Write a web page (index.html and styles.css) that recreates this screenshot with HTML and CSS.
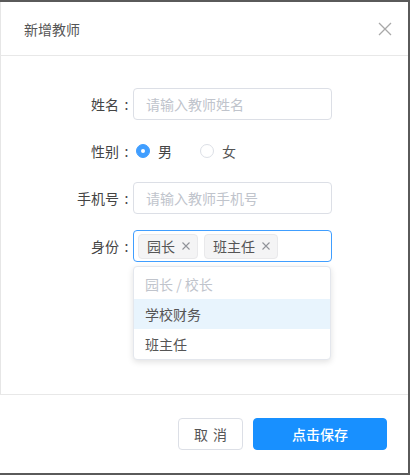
FILE: index.html
```html
<!DOCTYPE html>
<html lang="zh">
<head>
<meta charset="utf-8">
<link rel="stylesheet" href="styles.css">
</head>
<body>
<div class="dialog">
  <div class="dialog-header">
    <span class="dialog-title">新增教师</span>
    <span class="close">
      <svg width="14" height="14" viewBox="0 0 14 14"><path d="M1 1 L13 13 M13 1 L1 13" stroke="#a8a8a8" stroke-width="1.3" fill="none"/></svg>
    </span>
  </div>
  <div class="dialog-body">
    <div class="form-row">
      <label class="form-label">姓名<span class="colon">:</span></label>
      <div class="input"><span class="placeholder">请输入教师姓名</span></div>
    </div>
    <div class="form-row radio-row">
      <label class="form-label">性别<span class="colon">:</span></label>
      <div class="radios">
        <span class="radio checked"><span class="radio-dot"></span><span class="radio-text">男</span></span>
        <span class="radio"><span class="radio-dot"></span><span class="radio-text">女</span></span>
      </div>
    </div>
    <div class="form-row">
      <label class="form-label">手机号<span class="colon">:</span></label>
      <div class="input"><span class="placeholder">请输入教师手机号</span></div>
    </div>
    <div class="form-row select-row">
      <label class="form-label">身份<span class="colon">:</span></label>
      <div class="select-wrap">
        <div class="input select">
          <span class="tag">园长<svg class="tag-close" width="8" height="8" viewBox="0 0 8 8"><path d="M0.5 0.5 L7.5 7.5 M7.5 0.5 L0.5 7.5" stroke="#909399" stroke-width="1.1" fill="none"/></svg></span>
          <span class="tag">班主任<svg class="tag-close" width="8" height="8" viewBox="0 0 8 8"><path d="M0.5 0.5 L7.5 7.5 M7.5 0.5 L0.5 7.5" stroke="#909399" stroke-width="1.1" fill="none"/></svg></span>
        </div>
        <ul class="dropdown">
          <li class="option disabled">园长 / 校长</li>
          <li class="option hover">学校财务</li>
          <li class="option">班主任</li>
        </ul>
      </div>
    </div>
  </div>
  <div class="dialog-footer">
    <button class="btn btn-default">取 消</button>
    <button class="btn btn-primary">点击保存</button>
  </div>
</div>
</body>
</html>
```

FILE: styles.css
```css
* { box-sizing: border-box; }
html, body { height: 100%; }
body {
  margin: 0;
  padding: 2px 2px 2px 0;
  background: #5a5a5a;
  font-family: "Noto Sans CJK SC", "Noto Sans", sans-serif;
  font-size: 14px;
}
.dialog {
  background: #fff;
  height: 471px;
  display: flex;
  flex-direction: column;
}
.dialog-header {
  height: 54px;
  border-bottom: 1px solid #e8e8e8;
  border-left: 1px solid #e6e6e6;
  display: flex;
  align-items: center;
  justify-content: space-between;
  padding: 0 16px 0 23px;
}
.dialog-title {
  font-size: 14px;
  color: #555;
  line-height: 1;
}
.close { display: flex; }
.dialog-body {
  height: 338px;
  border-left: 1px solid #e6e6e6;
  padding-top: 32px;
  display: flex;
  flex-direction: column;
  gap: 16px;
}
.form-row {
  display: flex;
  align-items: center;
  height: 32px;
}
.radio-row { height: 30px; }
.select-row { align-items: flex-start; }
.form-label {
  width: 132px;
  text-align: right;
  color: #444;
  font-size: 14px;
  line-height: 32px;
}
.colon {
  display: inline-block;
  width: 14px;
  text-align: center;
  padding-left: 1px;
}
.input {
  width: 199px;
  height: 32px;
  border: 1px solid #dcdfe6;
  border-radius: 4px;
  display: flex;
  align-items: center;
  padding: 0 12px;
}
.placeholder { color: #c0c4cc; font-size: 14px; }
.radios { display: flex; align-items: center; padding-left: 3px; }
.radio { display: flex; align-items: center; margin-right: 28px; }
.radio-dot {
  width: 14px; height: 14px; border-radius: 50%;
  border: 1px solid #dcdfe6; background: #fff;
  position: relative;
}
.radio.checked .radio-dot { border-color: #409eff; background: #409eff; }
.radio.checked .radio-dot::after {
  content: ""; position: absolute; left: 4px; top: 4px;
  width: 4px; height: 4px; border-radius: 50%; background: #fff;
}
.radio-text { margin-left: 8px; color: #555; font-size: 14px; }
.radio.checked .radio-text { color: #444; }
.select-wrap { position: relative; width: 199px; }
.select { border-color: #409eff; padding: 0 4px; gap: 6px; }
.tag {
  display: inline-flex; align-items: center;
  height: 25px;
  padding: 0 7px 0 8px;
  background: #f4f4f5;
  border: 1px solid #e9e9eb;
  border-radius: 4px;
  color: #555;
  font-size: 14px;
}
.tag-close { margin-left: 7px; }
.dropdown {
  position: absolute;
  left: 0; top: 36px;
  width: 198px;
  margin: 0;
  padding: 2px 0 0;
  list-style: none;
  background: #fff;
  border: 1px solid #e4e7ed;
  border-radius: 4px;
  box-shadow: 0 2px 6px rgba(0,0,0,0.12);
}
.option {
  height: 30px;
  line-height: 30px;
  padding: 0 11px;
  color: #555;
  font-size: 14px;
}
.option.disabled { color: #c0c4cc; }
.option.hover { background: #e8f4fd; }
.dialog-footer {
  flex: 1;
  border-top: 1px solid #e8e8e8;
  display: flex;
  justify-content: flex-end;
  align-items: flex-start;
  padding: 23px 21px 0 0;
  gap: 10px;
}
.btn {
  height: 32px;
  border-radius: 4px;
  font-family: inherit;
  font-size: 14px;
  cursor: pointer;
}
.btn-default {
  width: 65px;
  background: #fff;
  border: 1px solid #dcdfe6;
  color: #555;
  word-spacing: 2px;
}
.btn-primary {
  width: 134px;
  background: #1890ff;
  border: 1px solid #1890ff;
  color: #fff;
  font-weight: 500;
}
```
